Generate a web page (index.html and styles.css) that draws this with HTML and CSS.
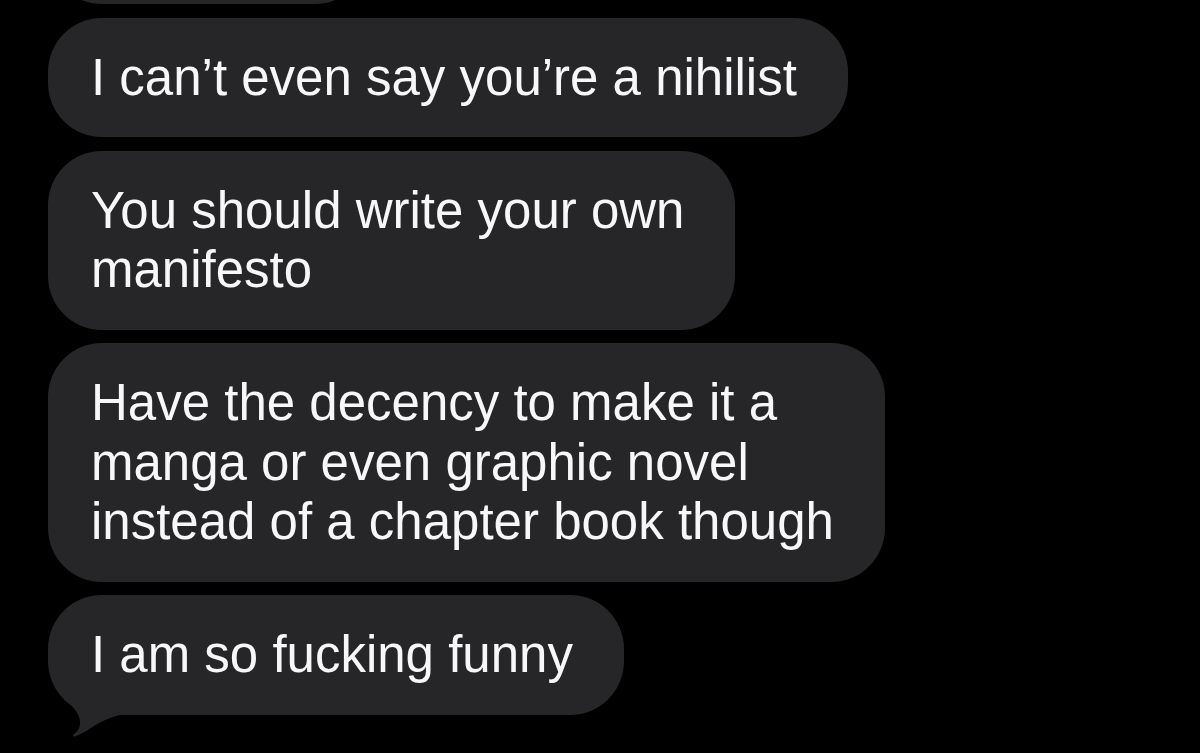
FILE: index.html
```html
<!DOCTYPE html>
<html>
<head>
<meta charset="utf-8">
<link rel="stylesheet" href="styles.css">
</head>
<body>
<div class="thread">
  <div class="bubble partial"></div>
  <div class="bubble">I can’t even say you’re a nihilist</div>
  <div class="bubble">You should write your own<br>manifesto</div>
  <div class="bubble wide">Have the decency to make it a<br>manga or even graphic novel<br>instead of a chapter book though</div>
  <div class="bubble last">I am so fucking funny<svg class="tail" width="80" height="54" viewBox="0 0 80 54"><path d="M60 0 L20 16 C26 24 31 28 32 36 C32.5 42 30 46.5 25.5 49.5 C24 50.8 25.5 52 27.5 51.2 C40 47 52 34 72 30 L80 30 L80 0 Z"/></svg></div>
</div>
</body>
</html>
```
FILE: styles.css
```css
html, body {
  margin: 0;
  padding: 0;
  background: #000;
  height: 100%;
  overflow: hidden;
}

.thread {
  display: flex;
  flex-direction: column;
  align-items: flex-start;
  gap: 13.5px;
  padding-left: 48px;
}

.bubble {
  position: relative;
  background: #262629;
  color: #f7f7f7;
  font-family: "Liberation Sans", Arial, sans-serif;
  font-size: 51px;
  line-height: 59.5px;
  padding: 30px 51px 30px 43px;
  border-radius: 54px;
  white-space: nowrap;
}

.partial {
  width: 227px;
  height: 60px;
  margin-top: -116px;
}

.wide {
  padding-right: 51px;
}

.tail {
  position: absolute;
  left: 0;
  bottom: -24px;
  fill: #262629;
}
```
